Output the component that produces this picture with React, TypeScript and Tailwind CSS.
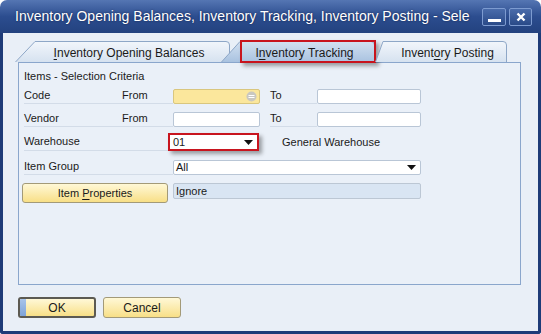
import React from "react";

// ---------------- SMALL PARTS ----------------
const FONT = { fontFamily: '"Liberation Sans", Arial, sans-serif' };

function TabShape({ w, slant, fill }: { w: number; slant: number; fill: string }) {
  const id = "g" + fill;
  return (
    <svg className="absolute inset-0" width={w} height={22} viewBox={`0 0 ${w} 22`}>
      <defs>
        <linearGradient id={id} x1="0" y1="0" x2="0" y2="1">
          {fill === "active" ? (
            <>
              <stop offset="0" stopColor="#d3e1f1" />
              <stop offset="1" stopColor="#a9c2e0" />
            </>
          ) : (
            <>
              <stop offset="0" stopColor="#f2f6fb" />
              <stop offset="1" stopColor="#d6e2f0" />
            </>
          )}
        </linearGradient>
      </defs>
      <path
        d={`M0.5 22 L${slant} 1.5 L${w - 5} 1.5 Q${w - 1.5} 1.5 ${w - 1.5} 5 L${w - 1.5} 22`}
        fill={`url(#${id})`}
        stroke="#8ea7c7"
        strokeWidth={1}
      />
    </svg>
  );
}

function Tab({ w, slant, label, u, active, className }: { w: number; slant: number; label: string; u: number; active?: boolean; className?: string }) {
  return (
    <div className={"relative h-[22px] shrink-0 " + (className ?? "")} style={{ width: w }}>
      <TabShape w={w} slant={slant} fill={active ? "active" : "normal"} />
      <div className="relative flex h-full items-center justify-center pl-[12px] pt-[3px] text-[12px] text-[#1a1a1a]">
        <span className="whitespace-pre">
          {label.slice(0, u)}
          <span className="underline underline-offset-2">{label[u]}</span>
          {label.slice(u + 1)}
        </span>
      </div>
    </div>
  );
}

function Field({ w, className }: { w: string; className?: string }) {
  return <div className={w + " h-[15px] rounded-[2px] border border-[#b9c6d6] bg-white " + (className ?? "")} />;
}

function Triangle() {
  return (
    <svg width="9" height="5" viewBox="0 0 9 5">
      <path d="M0 0 L9 0 L4.5 5 Z" fill="#111" />
    </svg>
  );
}

// ========== DIALOG ==========
export default function App() {
  return (
    <div className="w-[541px] h-[334px] flex flex-col bg-white text-[11px] text-[#1a1a1a]" style={FONT}>
      {/* TITLE BAR */}
      <div className="h-[33px] shrink-0 flex items-center rounded-t-[7px] bg-gradient-to-b from-[#5576b3] via-[#2c4d8f] to-[#23427f] pl-[15px] pr-[9px]">
        <div className="flex-1 whitespace-nowrap text-[14px] text-white [text-shadow:0_0_2px_rgba(0,0,30,0.6)]">
          Inventory Opening Balances, Inventory Tracking, Inventory Posting - Sele
        </div>
        <div className="ml-[2px] flex h-[18px] w-[24px] items-end justify-center rounded-[2px] border border-[#7d9bd0] bg-gradient-to-b from-[#4a6cab] to-[#2a4a88] pb-[3px]">
          <div className="h-[3px] w-[13px] bg-white" />
        </div>
        <div className="ml-[3px] flex h-[18px] w-[23px] items-center justify-center rounded-[2px] border border-[#7d9bd0] bg-gradient-to-b from-[#4a6cab] to-[#2a4a88]">
          <svg width="10" height="10" viewBox="0 0 10 10">
            <path d="M1.5 1.5 L8.5 8.5 M8.5 1.5 L1.5 8.5" stroke="#fff" strokeWidth={2.4} />
          </svg>
        </div>
      </div>

      {/* BODY */}
      <div className="flex-1 flex flex-col border-x-[3px] border-b-[3px] border-[#1e3b78] rounded-b-[3px] bg-[#e9eff7] pl-[15px] pr-[17px] pt-[7px]">
        {/* TABS */}
        <div className="flex h-[22px] -ml-[3px]">
          <Tab w={216} slant={20} label="Inventory Opening Balances" u={0} />
          <div className="relative -ml-[10px]">
            <Tab w={155} slant={19} label="Inventory Tracking" u={1} active />
            <div className="absolute left-[19px] top-0 h-[23px] w-[136px] border-2 border-[#c8141e] shadow-[3px_3px_4px_rgba(0,0,0,0.35)]" />
          </div>
          <Tab w={133} slant={8} label="Inventory Posting" u={6} className="-ml-[1px]" />
        </div>

        {/* PANEL */}
        <div className="h-[223px] flex flex-col border border-[#8aa6cc] bg-[#eaf0f8] pl-[5px] pt-[6px]">
          <div className="h-[14px] leading-[14px]">Items - Selection Criteria</div>

          {/* Code */}
          <div className="mt-[5px] flex h-[16px] items-center">
            <div className="flex h-full w-[149px] items-center border-b border-[#d3dce8]">
              <span className="w-[98px]">Code</span>
              <span>From</span>
            </div>
            <div className="relative h-[15px] w-[87px] rounded-[2px] border border-[#d9c67e] bg-[#fbe79c]">
              <svg className="absolute right-[2px] top-[1px]" width="11" height="11" viewBox="0 0 11 11">
                <circle cx="5.5" cy="5.5" r="5" fill="#c9c7c0" />
                <path d="M2.5 4.5 H8.5 M2.5 6.5 H8.5" stroke="#fff" strokeWidth={1} />
              </svg>
            </div>
            <div className="ml-[10px] flex h-full w-[47px] items-center border-b border-[#d3dce8]">To</div>
            <Field w="w-[104px]" />
          </div>

          {/* Vendor */}
          <div className="mt-[7px] flex h-[16px] items-center">
            <div className="flex h-full w-[149px] items-center border-b border-[#d3dce8]">
              <span className="w-[98px]">Vendor</span>
              <span>From</span>
            </div>
            <Field w="w-[87px]" />
            <div className="ml-[10px] flex h-full w-[47px] items-center border-b border-[#d3dce8]">To</div>
            <Field w="w-[104px]" />
          </div>

          {/* Warehouse */}
          <div className="mt-[6px] flex h-[18px] items-center">
            <div className="flex h-full w-[144px] items-center border-b border-[#d3dce8]">Warehouse</div>
            <div className="flex h-[18px] w-[91px] items-center justify-between border-2 border-[#c8141e] bg-white pl-[3px] pr-[4px] shadow-[3px_3px_4px_rgba(0,0,0,0.35)]">
              <span>01</span>
              <Triangle />
            </div>
            <span className="ml-[23px]">General Warehouse</span>
          </div>

          {/* Item Group */}
          <div className="mt-[8px] flex h-[16px] items-center">
            <div className="flex h-full w-[149px] items-center border-b border-[#d3dce8]">Item Group</div>
            <div className="flex h-[15px] w-[248px] items-center justify-between rounded-[2px] border border-[#b9c6d6] bg-white pl-[2px] pr-[4px]">
              <span>All</span>
              <Triangle />
            </div>
          </div>

          {/* Item Properties */}
          <div className="mt-[8px] flex items-start -ml-[2px]">
            <button className="h-[20px] w-[146px] rounded-[3px] border border-[#a39a78] bg-gradient-to-b from-[#fff8d6] to-[#f8df86] text-[11px]">
              Item <span className="underline underline-offset-2">P</span>roperties
            </button>
            <div className="ml-[5px] flex h-[16px] w-[248px] items-center rounded-[2px] border border-[#bcc7d4] bg-[#d9e5f3] pl-[2px]">
              Ignore
            </div>
          </div>
        </div>

        {/* FOOTER BUTTONS */}
        <div className="mt-[12px] flex gap-[7px]">
          <button className="relative h-[21px] w-[78px] overflow-hidden rounded-[3px] border-2 border-[#5c5a52] bg-gradient-to-b from-[#fff8d6] to-[#f8df86] text-[12px]">
            <span className="absolute left-0 top-0 h-full w-[6px] bg-gradient-to-b from-[#a8c4ea] to-[#7ea3d8]" />
            OK
          </button>
          <button className="h-[21px] w-[78px] rounded-[3px] border border-[#a39a78] bg-gradient-to-b from-[#fff8d6] to-[#f8df86] text-[12px]">
            Cancel
          </button>
        </div>
      </div>
    </div>
  );
}
